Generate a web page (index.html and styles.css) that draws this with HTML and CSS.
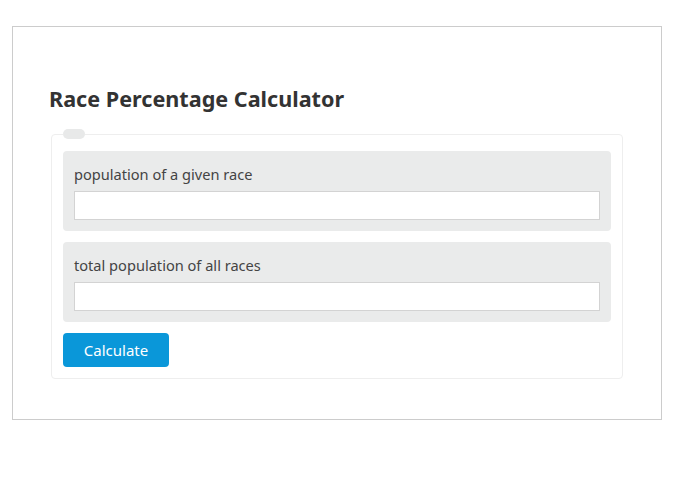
FILE: index.html
```html
<!DOCTYPE html>
<html>

<head>
    <link rel="stylesheet" href="styles.css">
</head>

<body>
    <div class="calc">
        <h2 class="title">Race Percentage Calculator</h2>
        <fieldset class="box">
            <legend></legend>
            <div class="field">
                <label>population of a given race</label>
                <input type="text">
            </div>
            <div class="field">
                <label>total population of all races</label>
                <input type="text">
            </div>
            <button class="btn">Calculate</button>
        </fieldset>
    </div>
</body>

</html>
```

FILE: styles.css
```css
* {
    padding: 0;
    margin: 0;
    box-sizing: border-box;
}

body {
    font-family: "Noto Sans", "Open Sans", sans-serif;
    color: #444;
    background: #fff;
}

.calc {
    width: 650px;
    margin: 26px 0 0 12px;
    border: 1px solid #ccc;
    padding: 57px 36px 40px;
}

.title {
    font-size: 21.6px;
    font-weight: bold;
    color: #333;
    line-height: 30px;
    margin-bottom: 15px;
}

.box {
    margin: 0 2px;
    border: 1px solid #eee;
    border-radius: 4px;
    padding: 12px 11px 11px;
}

.box legend {
    width: 22px;
    height: 10px;
    background: #e8e9e9;
    border-radius: 5px;
}

.field {
    background: #eaebeb;
    border-radius: 4px;
    padding: 11px;
    margin-bottom: 11px;
}

.field label {
    display: block;
    font-size: 14.6px;
    line-height: 24px;
    margin-bottom: 5px;
}

.field input {
    display: block;
    width: 100%;
    height: 29px;
    border: 1px solid #d3d3d3;
    background: #fff;
}

.btn {
    display: block;
    width: 106px;
    height: 34px;
    border: none;
    border-radius: 4px;
    background: #0a97d9;
    color: #fff;
    font-family: inherit;
    font-size: 15px;
}
```
